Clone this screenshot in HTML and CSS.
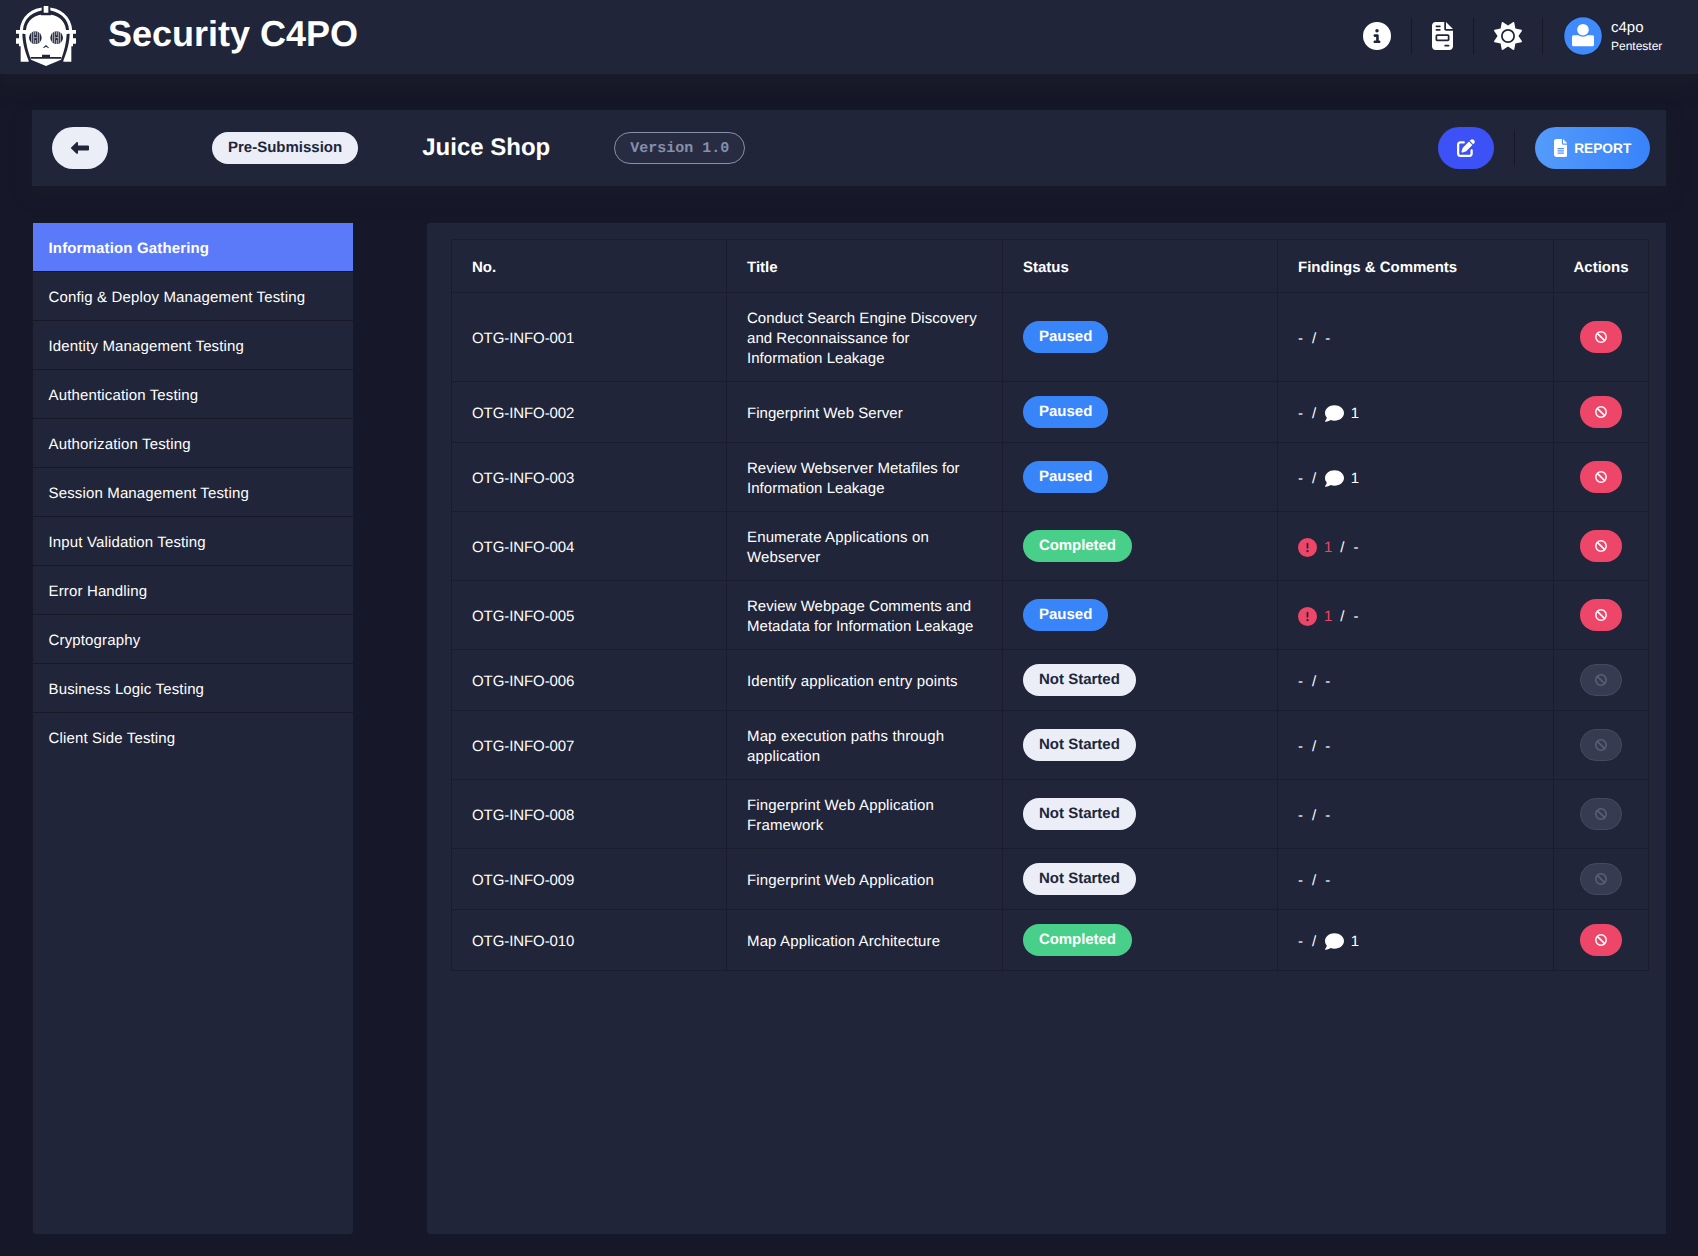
FILE: index.html
```html
<!DOCTYPE html>
<html lang="en">
<head>
<meta charset="utf-8">
<title>Security C4PO</title>
<link rel="stylesheet" href="styles.css">
</head>
<body>
<svg class="sprite" aria-hidden="true">
  <symbol id="info" viewBox="0 0 512 512"><path d="M256 512A256 256 0 1 0 256 0a256 256 0 1 0 0 512zM216 336h24V272H216c-13.3 0-24-10.7-24-24s10.7-24 24-24h48c13.3 0 24 10.7 24 24v88h8c13.3 0 24 10.7 24 24s-10.7 24-24 24H216c-13.3 0-24-10.7-24-24s10.7-24 24-24zm40-208a32 32 0 1 1 0 64 32 32 0 1 1 0-64z"/></symbol>
  <symbol id="invoice" viewBox="0 0 384 512"><path d="M64 0C28.7 0 0 28.7 0 64V448c0 35.3 28.7 64 64 64H320c35.3 0 64-28.7 64-64V160H256c-17.7 0-32-14.3-32-32V0H64zM256 0V128H384L256 0zM80 64h64c8.800 0 16 7.200 16 16s-7.200 16-16 16H80c-8.800 0-16-7.200-16-16s7.200-16 16-16zm0 64h64c8.800 0 16 7.200 16 16s-7.200 16-16 16H80c-8.800 0-16-7.200-16-16s7.200-16 16-16zm16 96H288c17.700 0 32 14.300 32 32v64c0 17.700-14.300 32-32 32H96c-17.700 0-32-14.300-32-32V256c0-17.700 14.300-32 32-32zm0 32v64H288V256H96zM240 416h64c8.800 0 16 7.200 16 16s-7.200 16-16 16H240c-8.800 0-16-7.200-16-16s7.200-16 16-16z"/></symbol>
  <symbol id="sun" viewBox="0 0 512 512"><path d="M361.5 1.2c5 2.1 8.600 6.600 9.600 11.900L391 121l107.900 19.800c5.300 1 9.800 4.600 11.900 9.600s1.500 10.700-1.600 15.200L446.900 256l62.300 90.300c3.100 4.500 3.700 10.200 1.600 15.200s-6.600 8.600-11.900 9.600L391 391 371.100 498.900c-1 5.300-4.600 9.800-9.600 11.900s-10.700 1.500-15.200-1.600L256 446.900l-90.300 62.300c-4.500 3.100-10.200 3.700-15.200 1.600s-8.600-6.600-9.600-11.900L121 391 13.100 371.100c-5.300-1-9.800-4.600-11.900-9.600s-1.500-10.700 1.600-15.200L65.100 256 2.800 165.700c-3.100-4.500-3.700-10.200-1.600-15.200s6.600-8.600 11.900-9.600L121 121 140.900 13.100c1-5.300 4.600-9.800 9.600-11.900s10.700-1.500 15.200 1.600L256 65.100 346.300 2.800c4.500-3.100 10.200-3.700 15.200-1.600zM160 256a96 96 0 1 1 192 0 96 96 0 1 1 -192 0zm224 0a128 128 0 1 0 -256 0 128 128 0 1 0 256 0z"/></symbol>
  <symbol id="arrow" viewBox="0 0 18 12"><path d="M7 3.400h9.800c.7 0 1.200.5 1.200 1.200v2.800c0 .7-.5 1.200-1.200 1.200H7v2.200c0 1-1 1.400-1.700.8L.4 6.800a1.100 1.100 0 0 1 0-1.600L5.300.4C6-.2 7 .2 7 1.200z"/></symbol>
  <symbol id="edit" viewBox="0 0 512 512"><path d="M471.600 21.700c-21.900-21.900-57.300-21.900-79.200 0L362.300 51.700l97.900 97.900 30.100-30.100c21.900-21.900 21.900-57.300 0-79.200L471.600 21.700zm-299.200 220c-6.100 6.100-10.800 13.600-13.500 21.900l-29.600 88.800c-2.900 8.600-.6 18.100 5.800 24.600s15.900 8.700 24.600 5.800l88.800-29.600c8.200-2.700 15.700-7.400 21.900-13.500L437.700 172.300 339.700 74.300 172.400 241.700zM96 64C43 64 0 107 0 160V416c0 53 43 96 96 96H352c53 0 96-43 96-96V320c0-17.700-14.300-32-32-32s-32 14.300-32 32v96c0 17.700-14.300 32-32 32H96c-17.700 0-32-14.300-32-32V160c0-17.700 14.300-32 32-32h96c17.700 0 32-14.300 32-32s-14.300-32-32-32H96z"/></symbol>
  <symbol id="file" viewBox="0 0 384 512"><path d="M64 0C28.700 0 0 28.700 0 64V448c0 35.300 28.700 64 64 64H320c35.300 0 64-28.700 64-64V160H256c-17.700 0-32-14.300-32-32V0H64zM256 0V128H384L256 0zM112 256H272c8.800 0 16 7.200 16 16s-7.200 16-16 16H112c-8.800 0-16-7.200-16-16s7.200-16 16-16zm0 64H272c8.800 0 16 7.200 16 16s-7.200 16-16 16H112c-8.800 0-16-7.200-16-16s7.200-16 16-16zm0 64H272c8.800 0 16 7.200 16 16s-7.200 16-16 16H112c-8.800 0-16-7.200-16-16s7.200-16 16-16z"/></symbol>
  <symbol id="alert" viewBox="0 0 512 512"><path d="M256 512A256 256 0 1 0 256 0a256 256 0 1 0 0 512zm0-384c13.300 0 24 10.700 24 24V264c0 13.300-10.700 24-24 24s-24-10.700-24-24V152c0-13.300 10.700-24 24-24zM224 352a32 32 0 1 1 64 0 32 32 0 1 1 -64 0z"/></symbol>
  <symbol id="comment" viewBox="0 0 512 512"><path d="M512 240c0 114.900-114.600 208-256 208c-37.100 0-72.300-6.400-104.100-17.900c-11.900 8.700-31.300 20.600-54.300 30.600C73.600 471.100 44.700 480 16 480c-6.500 0-12.300-3.900-14.800-9.900c-2.500-6-1.100-12.800 3.400-17.400l.3-.3c.3-.3 .7-.7 1.300-1.400c1.100-1.200 2.800-3.100 4.900-5.700c4.100-5 9.600-12.400 15.200-21.600c10-16.600 19.500-38.400 21.400-62.900C17.700 326.800 0 285.100 0 240C0 125.100 114.600 32 256 32s256 93.100 256 208z"/></symbol>
  <symbol id="ban" viewBox="0 0 12 12"><path d="M2.100 2.100 9.900 9.900" fill="none" stroke="currentColor" stroke-width="1.500"/><circle cx="6" cy="6" r="5.200" fill="none" stroke="currentColor" stroke-width="1.500"/></symbol>
</svg>

<header class="topbar">
  <svg class="logo" viewBox="48 18 180 180">
    <path d="M64 92C66 52 98 26 138 26S210 52 212 92" fill="none" stroke="#fff" stroke-width="9"/>
    <path class="gap" d="M125 18h26v26h-26z"/>
    <path d="M131 18h14v22h-14zM48 90h34v11H48zM48 115h17v16H48zM194 90h34v11h-34zM211 115h17v16h-17z"/>
    <path d="M57 98h10c0 26 6 52 19 84v3H62v-46h-5zM219 98h-10c0 26-6 52-19 84v3h24v-46h5z"/>
    <path d="M138 43C105 43 81 60 78 90H72v12h4C77 130 84 154 93 179L138 198 183 179C192 154 199 130 200 102h4V90h-6C195 60 171 43 138 43z"/>
    <path class="gap" d="M123 38h30v8h-30zM92 171h34v-7h24v7h34v5H92z"/>
    <path class="gap" d="M128 144l10-9 10 9-5-1-5-3-5 3z"/>
    <circle class="gap" cx="106" cy="113" r="19"/><circle class="gap" cx="170" cy="113" r="19"/>
    <path d="M95 97v32M101 95v36M106 94v12M106 120v12M112 95v36M118 98v30M158 98v30M164 95v36M170 94v12M170 120v12M175 95v36M181 97v32M102 113h8M166 113h8" stroke="#fff" stroke-width="2"/>
  </svg>
  <h1 class="brand">Security C4PO</h1>
  <nav class="tools">
    <svg class="icon tool"><use href="#info"/></svg>
    <i class="rule"></i>
    <svg class="icon tool narrow"><use href="#invoice"/></svg>
    <i class="rule"></i>
    <svg class="icon tool"><use href="#sun"/></svg>
    <i class="rule"></i>
    <div class="user">
      <svg class="icon avatar" viewBox="0 0 40 40"><circle cx="20" cy="20" r="19.500" fill="#1b1e33"/><circle cx="20" cy="20" r="18.800" fill="#408bfb"/><rect x="9" y="19.200" width="22" height="11" rx="1.500"/><circle cx="20" cy="13.700" r="7" fill="#408bfb"/><circle cx="20" cy="13.700" r="5.800"/></svg>
      <div class="who"><span class="name">c4po</span><span class="role">Pentester</span></div>
    </div>
  </nav>
</header>

<section class="project">
  <button class="btn back"><svg class="icon arrow"><use href="#arrow"/></svg></button>
  <span class="tag basic state">Pre-Submission</span>
  <h2 class="title">Juice Shop</h2>
  <span class="tag version">Version 1.0</span>
  <div class="actions">
    <button class="btn edit"><svg class="icon small"><use href="#edit"/></svg></button>
    <i class="rule"></i>
    <button class="btn report"><svg class="icon doc"><use href="#file"/></svg><span>REPORT</span></button>
  </div>
</section>

<main class="layout">
  <ul class="card menu">
    <li class="active">Information Gathering</li>
    <li>Config &amp; Deploy Management Testing</li>
    <li>Identity Management Testing</li>
    <li>Authentication Testing</li>
    <li>Authorization Testing</li>
    <li>Session Management Testing</li>
    <li>Input Validation Testing</li>
    <li>Error Handling</li>
    <li>Cryptography</li>
    <li>Business Logic Testing</li>
    <li>Client Side Testing</li>
  </ul>
  <section class="card content">
    <table class="grid">
      <colgroup><col class="c-no"><col class="c-title"><col class="c-status"><col class="c-find"><col class="c-act"></colgroup>
      <thead><tr><th>No.</th><th>Title</th><th>Status</th><th>Findings &amp; Comments</th><th>Actions</th></tr></thead>
      <tbody>
        <tr class="l3"><td>OTG-INFO-001</td><td>Conduct Search Engine Discovery and Reconnaissance for Information Leakage</td><td><span class="tag info">Paused</span></td><td><div class="marks"><span>-</span><span class="slash">/</span><span>-</span></div></td><td><button class="stop"><svg class="ban"><use href="#ban"/></svg></button></td></tr>
        <tr class="l1"><td>OTG-INFO-002</td><td>Fingerprint Web Server</td><td><span class="tag info">Paused</span></td><td><div class="marks"><span>-</span><span class="slash">/</span><svg class="icon mark"><use href="#comment"/></svg><span>1</span></div></td><td><button class="stop"><svg class="ban"><use href="#ban"/></svg></button></td></tr>
        <tr class="l2"><td>OTG-INFO-003</td><td>Review Webserver Metafiles for Information Leakage</td><td><span class="tag info">Paused</span></td><td><div class="marks"><span>-</span><span class="slash">/</span><svg class="icon mark"><use href="#comment"/></svg><span>1</span></div></td><td><button class="stop"><svg class="ban"><use href="#ban"/></svg></button></td></tr>
        <tr class="l2 wide"><td>OTG-INFO-004</td><td>Enumerate Applications on Webserver</td><td><span class="tag success">Completed</span></td><td><div class="marks"><svg class="icon mark danger"><use href="#alert"/></svg><span class="danger">1</span><span class="slash">/</span><span>-</span></div></td><td><button class="stop"><svg class="ban"><use href="#ban"/></svg></button></td></tr>
        <tr class="l2"><td>OTG-INFO-005</td><td>Review Webpage Comments and Metadata for Information Leakage</td><td><span class="tag info">Paused</span></td><td><div class="marks"><svg class="icon mark danger"><use href="#alert"/></svg><span class="danger">1</span><span class="slash">/</span><span>-</span></div></td><td><button class="stop"><svg class="ban"><use href="#ban"/></svg></button></td></tr>
        <tr class="l1 wide"><td>OTG-INFO-006</td><td>Identify application entry points</td><td><span class="tag basic">Not Started</span></td><td><div class="marks"><span>-</span><span class="slash">/</span><span>-</span></div></td><td><button class="stop" disabled><svg class="ban"><use href="#ban"/></svg></button></td></tr>
        <tr class="l2 wide"><td>OTG-INFO-007</td><td>Map execution paths through application</td><td><span class="tag basic">Not Started</span></td><td><div class="marks"><span>-</span><span class="slash">/</span><span>-</span></div></td><td><button class="stop" disabled><svg class="ban"><use href="#ban"/></svg></button></td></tr>
        <tr class="l2 wide"><td>OTG-INFO-008</td><td>Fingerprint Web Application Framework</td><td><span class="tag basic">Not Started</span></td><td><div class="marks"><span>-</span><span class="slash">/</span><span>-</span></div></td><td><button class="stop" disabled><svg class="ban"><use href="#ban"/></svg></button></td></tr>
        <tr class="l1 wide"><td>OTG-INFO-009</td><td>Fingerprint Web Application</td><td><span class="tag basic">Not Started</span></td><td><div class="marks"><span>-</span><span class="slash">/</span><span>-</span></div></td><td><button class="stop" disabled><svg class="ban"><use href="#ban"/></svg></button></td></tr>
        <tr class="l1 wide"><td>OTG-INFO-010</td><td>Map Application Architecture</td><td><span class="tag success">Completed</span></td><td><div class="marks"><span>-</span><span class="slash">/</span><svg class="icon mark"><use href="#comment"/></svg><span>1</span></div></td><td><button class="stop"><svg class="ban"><use href="#ban"/></svg></button></td></tr>
      </tbody>
    </table>
  </section>
</main>
</body>
</html>
```
FILE: styles.css
```css
* { box-sizing: border-box; }

body {
  margin: 0;
  height: 1256px;
  display: flex;
  flex-direction: column;
  overflow: hidden;
  background: #161728;
  color: #fff;
  font: 15px/20px "Liberation Sans", Arial, sans-serif;
  text-rendering: geometricPrecision;
}

h1, h2, ul { margin: 0; padding: 0; }
.sprite { position: absolute; width: 0; height: 0; }
.icon, .ban, .logo { display: block; flex: none; fill: currentColor; }

.rule { width: 1px; height: 36px; background: #171728; }

.topbar {
  flex: none;
  height: 74px;
  display: flex;
  align-items: flex-start;
  padding: 0 36px 0 16px;
  background: #21253a;
  box-shadow: 0 8px 16px #1b1d2b;
}
.logo { width: 60px; height: 60px; margin-top: 6px; }
.logo .gap { fill: #21253a; }
.brand { margin: 10px 0 0 32px; font-size: 36px; line-height: 48px; }
.tools { display: flex; align-items: center; height: 72px; margin-left: auto; }
.tools .rule { margin: 0 20px; }
.tool { width: 28px; height: 28px; }
.tool.narrow { width: 21px; }
.user { display: flex; align-items: center; gap: 8px; }
.avatar { width: 40px; height: 40px; }
.who { display: flex; flex-direction: column; width: 51px; padding-top: 2px; }
.name { line-height: 18px; }
.role { font-size: 12px; line-height: 18px; }

.project {
  flex: none;
  display: flex;
  align-items: center;
  height: 76px;
  margin: 36px 32px 0;
  padding: 0 16px 0 20px;
  background: #21253a;
  box-shadow: 0 8px 16px #1a1b2a;
}
.btn {
  display: flex;
  align-items: center;
  justify-content: center;
  width: 56px;
  height: 42px;
  padding: 0;
  border: 0;
  border-radius: 21px;
  color: #fff;
  font: bold 14px/16px "Liberation Sans", Arial, sans-serif;
  text-rendering: inherit;
}
.back { background: #ebeef6; color: #21253a; }
.arrow { width: 18px; height: 12px; }
.edit { background: #3d52f6; }
.small { width: 18px; height: 18px; }
.report { width: 115px; gap: 7px; background: linear-gradient(90deg, #549bfb, #3883fa); font-size: 13.7px; }
.report span { padding-top: 2px; }
.doc { width: 13.5px; height: 18px; }

.tag {
  display: inline-block;
  height: 32px;
  padding: 0 16px;
  border-radius: 16px;
  font-weight: bold;
  line-height: 32px;
  white-space: nowrap;
  vertical-align: middle;
}
.basic { background: #ebeef6; color: #21253a; }
.info { background: #3885fa; }
.success { background: #48cf89; letter-spacing: -.08px; }
.state { margin-left: 104px; }
.title { margin-left: 64px; font-size: 24px; line-height: 32px; }
.version {
  margin-left: 64px;
  padding: 0 15px;
  border: 1px solid #868fab;
  background: #282c42;
  color: #868fab;
  font-family: "Liberation Mono", "Courier New", monospace;
}
.actions { display: flex; align-items: center; margin-left: auto; }
.actions .rule { margin: 0 20px; }

.layout {
  flex: 1;
  display: flex;
  gap: 72px;
  padding: 36px 32px 21px;
}
.card { background: #21253a; border: 1px solid #171828; border-radius: 4px; }
.menu { width: 322px; list-style: none; border-radius: 0 0 4px 4px; letter-spacing: .15px; }
.menu li { height: 49px; padding: 16px 15.500px 12px; border-bottom: 1px solid #171828; }
.menu li:last-child { border-bottom: 0; }
.menu .active { background: #5b7afa; font-weight: bold; }

.content { flex: 1; border-right: 0; border-radius: 4px 0 0 4px; padding: 16px 0 0 24px; }
.grid {
  width: 1198px;
  table-layout: fixed;
  border-collapse: separate;
  border-spacing: 0;
  border: solid #1a1d2d;
  border-width: 1px 0 0 1px;
}
.c-no, .c-status { width: 275px; }
.c-title, .c-find { width: 276px; }
.c-act { width: 95px; }
th, td { padding: 4px 20px 0; border: solid #1a1d2d; border-width: 0 1px 1px 0; text-align: left; vertical-align: middle; }
th { height: 53px; }
.l1 td { height: 61px; }
.l2 td { height: 69px; }
.l3 td { height: 89px; }
th:last-child { padding: 4px 0 0; text-align: center; }
td:first-child { letter-spacing: -.08px; }
td:nth-child(2) { letter-spacing: .04px; }
.wide td:nth-child(2) { letter-spacing: .14px; }
td:nth-child(3) { padding-top: 0; }
td:nth-child(4) { padding-top: 2px; }
td:last-child { padding: 0; }

.marks { display: flex; align-items: center; gap: 8px; }
.marks span { padding-top: 2px; }
.slash { margin: 0 1px; }
.danger + .slash { margin-left: 0; }
.mark { width: 19px; height: 19px; }
.slash + .mark { margin-left: -.500px; }
.mark + span { margin-left: -1px; }
.danger { color: #ee4668; }
.stop {
  display: flex;
  align-items: center;
  justify-content: center;
  width: 42px;
  height: 32px;
  margin: 0 auto;
  padding: 0;
  border: 0;
  border-radius: 16px;
  background: #ee4668;
  color: #fff;
}
.stop:disabled { background: #363b52; border: 1px solid #44495f; color: #59607a; }
.ban { width: 12px; height: 12px; }
```
